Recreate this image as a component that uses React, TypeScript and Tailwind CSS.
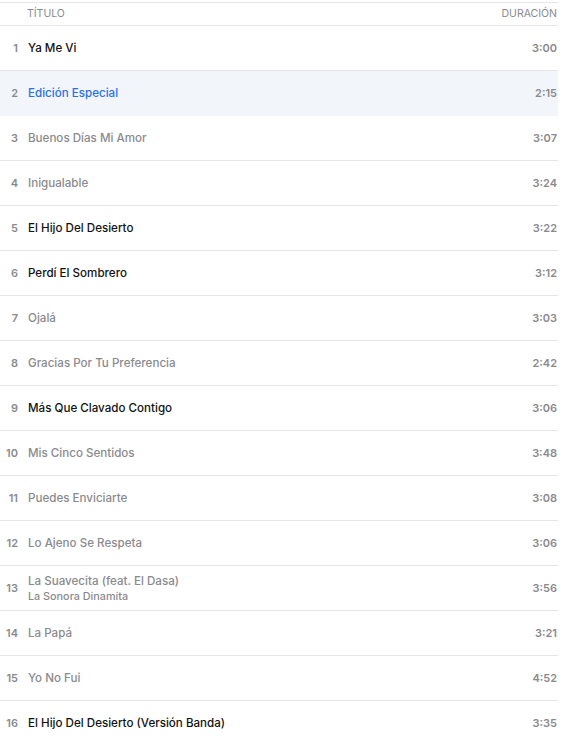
import React from "react";

type Track = { n: number; title: string; dur: string; state: "on" | "off" | "active"; artist?: string };

const tracks: Track[] = [
  { n: 1, title: "Ya Me Vi", dur: "3:00", state: "on" },
  { n: 2, title: "Edición Especial", dur: "2:15", state: "active" },
  { n: 3, title: "Buenos Días Mi Amor", dur: "3:07", state: "off" },
  { n: 4, title: "Inigualable", dur: "3:24", state: "off" },
  { n: 5, title: "El Hijo Del Desierto", dur: "3:22", state: "on" },
  { n: 6, title: "Perdí El Sombrero", dur: "3:12", state: "on" },
  { n: 7, title: "Ojalá", dur: "3:03", state: "off" },
  { n: 8, title: "Gracias Por Tu Preferencia", dur: "2:42", state: "off" },
  { n: 9, title: "Más Que Clavado Contigo", dur: "3:06", state: "on" },
  { n: 10, title: "Mis Cinco Sentidos", dur: "3:48", state: "off" },
  { n: 11, title: "Puedes Enviciarte", dur: "3:08", state: "off" },
  { n: 12, title: "Lo Ajeno Se Respeta", dur: "3:06", state: "off" },
  { n: 13, title: "La Suavecita (feat. El Dasa)", dur: "3:56", state: "off", artist: "La Sonora Dinamita" },
  { n: 14, title: "La Papá", dur: "3:21", state: "off" },
  { n: 15, title: "Yo No Fui", dur: "4:52", state: "off" },
  { n: 16, title: "El Hijo Del Desierto (Versión Banda)", dur: "3:35", state: "on" },
];

export default function App() {
  return (
    <div className="w-[563px] h-[745px] overflow-hidden bg-white" style={{ fontFamily: "Inter, 'Noto Sans', sans-serif" }}>
      <div className="mr-[5px] mt-[2px] border-t border-[#e6e6e6]">
        <div className="flex items-center h-[23px] border-b border-[#e6e6e6] text-[10.5px] text-[#8a8a8e] uppercase">
          <div className="w-[27px]" />
          <div className="flex-1">Título</div>
          <div className="pr-[1px]">Duración</div>
        </div>
        {tracks.map((t) => {
          const color =
            t.state === "active" ? "text-[#2a6fe8]" : t.state === "on" ? "text-[#111111]" : "text-[#8a8a8e]";
          return (
            <div
              key={t.n}
              className={`flex items-center h-[45px] border-b border-[#e6e6e6] ${t.state === "active" ? "bg-[#f2f6fb] border-b-transparent" : ""}`}
            >
              <div className="w-[18px] text-right text-[11px] font-semibold text-[#8a8a8e]">{t.n}</div>
              <div className="w-[10px]" />
              <div className="flex-1 flex flex-col">
                <div className={`text-[11.6px] font-medium leading-[16px] ${color}`}>{t.title}</div>
                {t.artist && (
                  <div className="text-[10.8px] font-medium leading-[15px] text-[#8a8a8e]">{t.artist}</div>
                )}
              </div>
              <div className="text-[11px] font-semibold text-[#8a8a8e] pr-[1px]">{t.dur}</div>
            </div>
          );
        })}
      </div>
    </div>
  );
}
